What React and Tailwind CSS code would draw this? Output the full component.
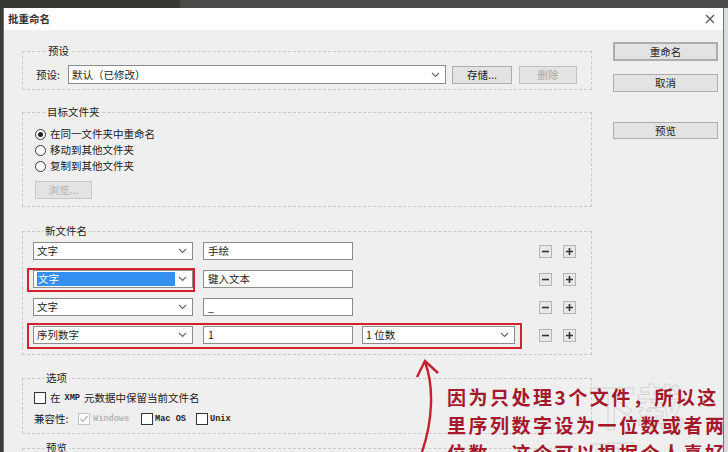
import { useState } from 'react';

const Chevron = () => (
  <svg width="9" height="6" viewBox="0 0 9 6" className="shrink-0">
    <path d="M1 1 L4.5 4.5 L8 1" fill="none" stroke="#666" strokeWidth="1.1" />
  </svg>
);

const Select = ({ className = '', children }) => (
  <div className={`flex h-[18px] items-center justify-between border border-[#8c8c8c] bg-white pl-[3px] pr-[5px] ${className}`}>
    <div className="flex h-full flex-1 items-center">{children}</div>
    <Chevron />
  </div>
);

const TextBox = ({ className = '', children }) => (
  <div className={`flex h-[18px] items-center border border-[#8c8c8c] bg-white px-[4px] ${className}`}>
    {children}
  </div>
);

const Btn = ({ className = '', children }) => (
  <div className={`flex items-center justify-center border border-[#adadad] bg-[#e3e3e3] text-[10.5px] ${className}`}>
    {children}
  </div>
);

const MiniBtn = ({ plus, className = '' }) => (
  <div className={`flex h-[13px] w-[13px] items-center justify-center border border-[#b4b4b4] bg-[#e8e8e8] ${className}`}>
    <svg width="9" height="9" viewBox="0 0 9 9">
      <path d={plus ? 'M1 4.5 H8 M4.5 1 V8' : 'M1 4.5 H8'} stroke="#333" strokeWidth="1.6" />
    </svg>
  </div>
);

const Radio = ({ checked }) => (
  <div className="flex h-[11px] w-[11px] items-center justify-center rounded-full border border-[#333] bg-white">
    {checked && <div className="h-[5px] w-[5px] rounded-full bg-[#222]" />}
  </div>
);

const Check = ({ checked, disabled }) => (
  <div className={`flex h-[12px] w-[12px] shrink-0 items-center justify-center border bg-white ${disabled ? 'border-[#c4c4c4]' : 'border-[#333]'}`}>
    {checked && (
      <svg width="10" height="10" viewBox="0 0 10 10">
        <path d="M1.5 5 L4 7.5 L8.5 2" fill="none" stroke="#b8b8b8" strokeWidth="1.4" />
      </svg>
    )}
  </div>
);

const Legend = ({ children }) => (
  <legend className="ml-[10px] px-[2px] text-[10.5px] leading-[14px] text-[#222]">{children}</legend>
);

const mono = "font-['Liberation_Mono',monospace] text-[8.6px] font-bold";

const App = () => {
  const [rows] = useState([
    { type: '文字', value: '手绘' },
    { type: '文字', value: '键入文本', picked: true },
    { type: '文字', value: '_' },
  ]);

  return (
    <div className="relative h-[452px] w-[728px] overflow-hidden bg-[#3b3a39] font-['Noto_Sans_CJK_SC',sans-serif] text-[#222]">
      {/* top strip of the window behind */}
      <div className="flex h-[8px]">
        <div className="w-[180px] bg-[#383633]" />
        <div className="flex-1 bg-[#4b4a48]" />
      </div>

      <div className="flex">
        {/* dialog */}
        <div className="ml-[3px] w-[721px] border-x border-[#4a78b0]">
          {/* title bar */}
          <div className="flex h-[22px] items-center justify-between bg-white pl-[4px] pr-[8px]">
            <span className="text-[10.5px] font-bold text-[#333]">批重命名</span>
            <svg width="10" height="10" viewBox="0 0 10 10">
              <path d="M1 1 L9 9 M9 1 L1 9" stroke="#555" strokeWidth="1.2" />
            </svg>
          </div>

          {/* body */}
          <div className="flex h-[422px] bg-[#efefef]">
            {/* left column */}
            <div className="w-[588px] pl-[18px] pt-[14px]">
              {/* 预设 */}
              <fieldset className="w-[570px] border border-dashed border-[#c9c9c9] pb-[5px] pl-[13px] pt-[7px]">
                <Legend>预设</Legend>
                <div className="flex h-[19px] items-center text-[10.5px]">
                  <span className="w-[32px]">预设:</span>
                  <Select className="h-[19px] w-[378px]">默认（已修改）</Select>
                  <Btn className="ml-[6px] h-[18px] w-[60px]">存储...</Btn>
                  <Btn className="ml-[7px] h-[18px] w-[58px] border-[#c2c2c2] bg-[#dcdcdc] text-[#a8a8a8]">删除</Btn>
                </div>
              </fieldset>

              {/* 目标文件夹 */}
              <fieldset className="mt-[15px] w-[570px] border border-dashed border-[#c9c9c9] pb-[7px] pl-[12px] pt-[7px]">
                <Legend>目标文件夹</Legend>
                <div className="flex h-[16px] items-center gap-[4px] text-[10.5px]">
                  <Radio checked />
                  <span>在同一文件夹中重命名</span>
                </div>
                <div className="flex h-[16px] items-center gap-[4px] text-[10.5px]">
                  <Radio />
                  <span>移动到其他文件夹</span>
                </div>
                <div className="flex h-[16px] items-center gap-[4px] text-[10.5px]">
                  <Radio />
                  <span>复制到其他文件夹</span>
                </div>
                <Btn className="mt-[7px] h-[18px] w-[57px] border-[#c8c8c8] bg-[#d6d6d6] text-[#b0b0b0]">浏览...</Btn>
              </fieldset>

              {/* 新文件名 */}
              <fieldset className="mt-[17px] w-[570px] border border-dashed border-[#c9c9c9] pb-[10px] pl-[10px] pt-[4px]">
                <Legend>新文件名</Legend>
                <div className="flex flex-col gap-[10px] text-[10.5px]">
                  {rows.map((r, i) => (
                    <div key={i} className="flex items-center">
                      <div className="relative">
                        {r.picked ? (
                          <Select className="w-[160px]">
                            <div className="mr-[3px] flex h-[14px] flex-1 items-center bg-[#3390f0] pl-[1px] text-white">{r.type}</div>
                          </Select>
                        ) : (
                          <Select className="w-[160px]">{r.type}</Select>
                        )}
                        {r.picked && (
                          <span className="pointer-events-none absolute -bottom-[4px] -left-[6px] -right-[2px] -top-[2px] border-2 border-[#d3222c]" />
                        )}
                      </div>
                      <TextBox className="ml-[10px] w-[150px]">{r.value}</TextBox>
                      <MiniBtn className="ml-[186px]" />
                      <MiniBtn plus className="ml-[11px]" />
                    </div>
                  ))}
                  <div className="flex items-center">
                    <div className="relative flex items-center">
                      <Select className="w-[160px]">序列数字</Select>
                      <TextBox className="ml-[10px] w-[150px]">1</TextBox>
                      <Select className="ml-[9px] w-[153px]">1 位数</Select>
                      <span className="pointer-events-none absolute -bottom-[5px] -left-[6px] -right-[7px] -top-[3px] border-2 border-[#d3222c]" />
                    </div>
                    <MiniBtn className="ml-[24px]" />
                    <MiniBtn plus className="ml-[11px]" />
                  </div>
                </div>
              </fieldset>

              {/* 选项 */}
              <fieldset className="mt-[16px] w-[570px] border border-dashed border-[#c9c9c9] pb-[6px] pl-[11px] pt-[5px]">
                <Legend>选项</Legend>
                <div className="flex h-[16px] items-center text-[10.5px]">
                  <Check />
                  <span className="ml-[4px]">在</span>
                  <span className={`ml-[4px] ${mono}`}>XMP</span>
                  <span className="ml-[4px]">元数据中保留当前文件名</span>
                </div>
                <div className="mt-[5px] flex h-[16px] items-center text-[10.5px]">
                  <span className="w-[44px]">兼容性:</span>
                  <Check checked disabled />
                  <span className={`ml-[3px] w-[48px] text-[#b5b5b5] ${mono}`}>Windows</span>
                  <Check />
                  <span className={`ml-[2px] w-[41px] ${mono}`}>Mac OS</span>
                  <Check />
                  <span className={`ml-[2px] ${mono}`}>Unix</span>
                </div>
              </fieldset>

              {/* 预览 */}
              <fieldset className="mt-[7px] h-[40px] w-[570px] border border-dashed border-[#c9c9c9] pl-[11px]">
                <Legend>预览</Legend>
              </fieldset>
            </div>

            {/* right column */}
            <div className="ml-[21px] flex w-[105px] flex-col pt-[12px]">
              <Btn className="h-[19px] border-2 border-[#3d7fc0]">重命名</Btn>
              <Btn className="mt-[13px] h-[18px]">取消</Btn>
              <Btn className="mt-[30px] h-[17px]">预览</Btn>
            </div>
          </div>
        </div>
        <div className="h-[444px] flex-1 bg-[#dcdcdc]" />
      </div>

      {/* watermark */}
      <div className="pointer-events-none absolute left-[588px] top-[376px] text-[48px] font-bold leading-[56px] text-transparent [-webkit-text-stroke:1px_#d6d6d6]">
        下载吧
      </div>

      {/* red annotation */}
      <svg className="pointer-events-none absolute left-0 top-0" width="728" height="452">
        <path d="M425 362 C 434 386, 433 420, 422 452" fill="none" stroke="#c8202c" strokeWidth="2.4" />
        <path d="M417 377 L425 361 L438 373" fill="none" stroke="#c8202c" strokeWidth="2.4" />
      </svg>
      <div className="pointer-events-none absolute left-[447px] top-[383px] text-[19px] font-bold leading-[28px] tracking-[2.5px] text-[#a5182b]">
        <div>因为只处理3个文件，所以这</div>
        <div>里序列数字设为一位数或者两</div>
        <div>位数，这个可以根据个人喜好</div>
      </div>
    </div>
  );
};

export default App;
